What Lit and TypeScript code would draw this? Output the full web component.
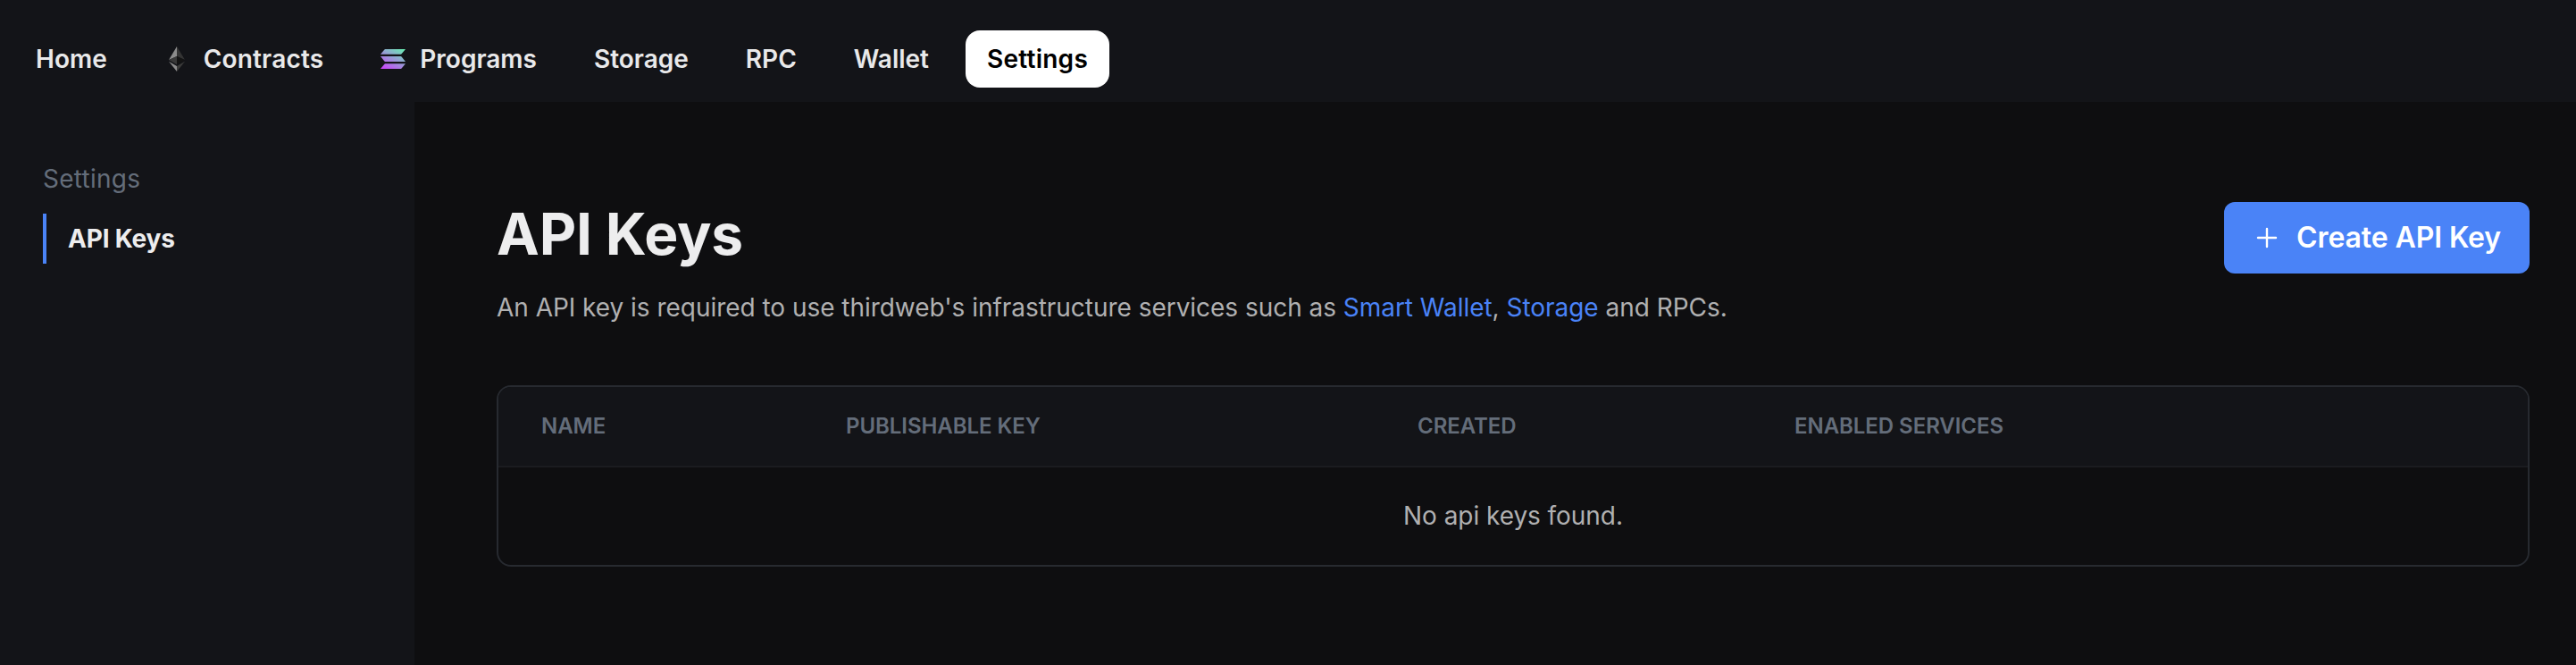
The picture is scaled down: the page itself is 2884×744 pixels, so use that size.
import { LitElement, html, css, nothing } from "lit";
import { customElement } from "lit/decorators.js";
import { classMap } from "lit/directives/class-map.js";

const ethereum = html`<svg class="eth" viewBox="0 0 18 28" aria-hidden="true">
  <path fill="#8c8c8c" d="M9 0 0 15l9-4z" />
  <path fill="#343434" d="M9 0v11l9 4z" />
  <path fill="#393939" d="M9 11 0 15l9 5.2z" />
  <path fill="#141414" d="M9 11v9.2l9-5.2z" />
  <path fill="#8c8c8c" d="M0 16.7 9 28v-6.1z" />
  <path fill="#3c3c3b" d="M9 21.9V28l9-11.3z" />
</svg>`;

const solana = html`<svg class="sol" viewBox="0 0 28 22" aria-hidden="true">
  <defs>
    <linearGradient id="sol" gradientUnits="userSpaceOnUse" x1="23" y1="-4" x2="6" y2="26">
      <stop offset="0" stop-color="#63f8ae" />
      <stop offset="1" stop-color="#d039ff" />
    </linearGradient>
  </defs>
  <g fill="url(#sol)">
    <path d="M5.2 0H28l-4.4 5.3a1 1 0 0 1-.8.4H0l4.4-5.3a1 1 0 0 1 .8-.4z" />
    <path d="M0 8.1h22.8a1 1 0 0 1 .8.4L28 13.9H5.2a1 1 0 0 1-.8-.4z" />
    <path d="M5.2 16.3H28l-4.4 5.3a1 1 0 0 1-.8.4H0l4.4-5.3a1 1 0 0 1 .8-.4z" />
  </g>
</svg>`;

const tabs = [
  { label: "Home" },
  { label: "Contracts", icon: ethereum, loose: true },
  { label: "Programs", icon: solana },
  { label: "Storage" },
  { label: "RPC" },
  { label: "Wallet" },
  { label: "Settings", active: true },
];

const columns = ["Name", "Publishable Key", "Created", "Enabled Services"];

@customElement("app-root")
export class AppRoot extends LitElement {
  static styles = css`
    :host {
      display: flex;
      flex-direction: column;
      height: 744px;
      background: #0e0e10;
      color: #ededee;
      font-family: Inter, sans-serif;
      font-size: 28px;
      line-height: 1.5;
    }
    a { color: inherit; text-decoration: none; }
    svg { display: block; }
    .topbar {
      box-sizing: border-box;
      flex: none;
      height: 114px;
      padding: 34px 16px 16px;
      background: #131418;
    }
    .tabs { display: flex; gap: 16px; }
    .tab {
      display: flex;
      align-items: center;
      height: 64px;
      padding: 0 24px;
      border-radius: 16px;
      font-weight: 600;
      color: #e9e9ea;
    }
    .tab.loose { letter-spacing: 0.18px; }
    .tab.active { margin-left: 1px; background: #fff; color: #000; letter-spacing: 0.25px; }
    .icon { display: flex; justify-content: center; width: 28px; margin-right: 16px; }
    .eth { width: 18px; height: 28px; }
    .sol { width: 28px; height: 22px; }
    .body { flex: 1; display: flex; min-height: 0; }
    .sidebar {
      box-sizing: border-box;
      flex: none;
      width: 464px;
      padding: 65px 48px 0;
      background: #131418;
    }
    .group { color: #646d7a; letter-spacing: 0.25px; }
    .side-link {
      display: flex;
      align-items: center;
      height: 56px;
      margin-top: 18px;
      padding-left: 24px;
      border-left: 4px solid #4a83f7;
      font-weight: 700;
      letter-spacing: -0.2px;
    }
    .content { flex: 1; min-width: 0; padding: 112px 52px 0 92px; }
    .intro { display: flex; justify-content: space-between; align-items: flex-start; }
    h1 {
      margin: 0;
      font-size: 64px;
      font-weight: 700;
      line-height: 72px;
      letter-spacing: -0.15px;
    }
    .lead { margin: 25px 0 0; color: #b0b0b1; letter-spacing: -0.033px; }
    .lead a { color: #4a83f7; }
    .create {
      box-sizing: border-box;
      display: flex;
      align-items: center;
      height: 80px;
      padding: 0 32px;
      border: 0;
      border-radius: 12px;
      background: #4a83f7;
      color: #fff;
      font: 600 32px/1 Inter, sans-serif;
      letter-spacing: -0.1px;
    }
    .plus { width: 32px; height: 32px; margin-right: 17px; }
    .table {
      box-sizing: border-box;
      height: 203px;
      margin-top: 66px;
      border: 2px solid #272a30;
      border-radius: 16px;
      overflow: hidden;
    }
    .head {
      box-sizing: border-box;
      display: grid;
      grid-template-columns: 341px 640px 422px 1fr;
      align-items: center;
      height: 90px;
      border-bottom: 2px solid #1b1c20;
      background: #131418;
      color: #646d7a;
      font-size: 24px;
      font-weight: 600;
      letter-spacing: -0.05px;
      text-transform: uppercase;
    }
    .cell { padding-left: 48px; }
    .empty {
      display: flex;
      align-items: center;
      justify-content: center;
      height: 107px;
      color: #b0b0b1;
      letter-spacing: -0.05px;
    }
  `;

  render() {
    return html`
      <header class="topbar">
        <nav class="tabs">
          ${tabs.map(
            (t) => html`<a class=${classMap({ tab: true, active: !!t.active, loose: !!t.loose })}>
              ${t.icon ? html`<span class="icon">${t.icon}</span>` : nothing}<span>${t.label}</span>
            </a>`
          )}
        </nav>
      </header>
      <div class="body">
        <aside class="sidebar">
          <div class="group">Settings</div>
          <a class="side-link">API Keys</a>
        </aside>
        <main class="content">
          <div class="intro">
            <div>
              <h1>API Keys</h1>
              <p class="lead">An API key is required to use thirdweb's infrastructure services such as <a>Smart Wallet</a>, <a>Storage</a> and RPCs.</p>
            </div>
            <button class="create">
              <svg class="plus" viewBox="0 0 32 32" fill="none" stroke="currentColor" stroke-width="2.4" stroke-linecap="round" aria-hidden="true"><path d="M16 6v20M6 16h20" /></svg>
              Create API Key
            </button>
          </div>
          <div class="table">
            <div class="head">${columns.map((c) => html`<div class="cell">${c}</div>`)}</div>
            <div class="empty">No api keys found.</div>
          </div>
        </main>
      </div>
    `;
  }
}
